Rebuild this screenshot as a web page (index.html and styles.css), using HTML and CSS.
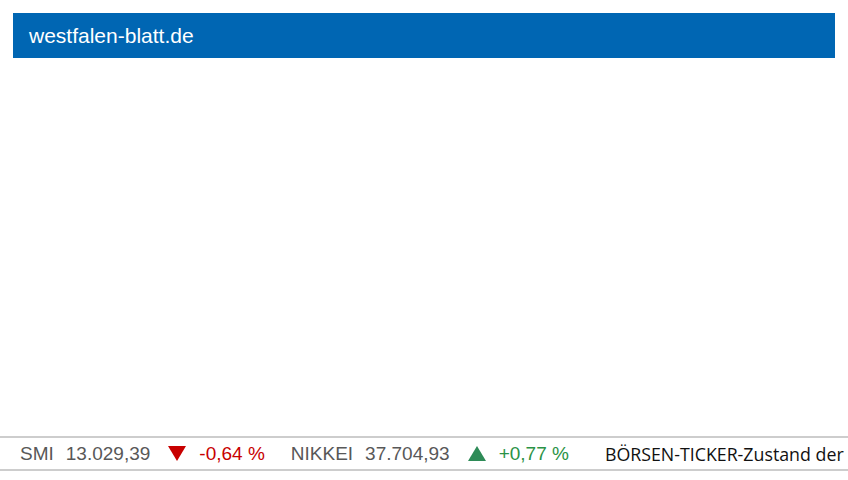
FILE: index.html
```html
<!DOCTYPE html>
<html lang="de">
<head>
  <meta charset="UTF-8">
  <title>westfalen-blatt.de</title>
  <link rel="stylesheet" href="styles.css">
</head>
<body>
  <div class="page">
    <div class="brand-bar">westfalen-blatt.de</div>
    <div class="content"></div>
    <div class="ticker">
      <div class="ticker-track">
        <span class="quote">
          <span class="index-name">SMI</span>
          <span class="index-value">13.029,39</span>
          <svg class="arrow" width="18" height="15" viewBox="0 0 18 15"><polygon points="0,0 18,0 9,15" fill="#c80000"/></svg>
          <span class="change down">-0,64 %</span>
        </span>
        <span class="quote">
          <span class="index-name">NIKKEI</span>
          <span class="index-value">37.704,93</span>
          <svg class="arrow" width="18" height="15" viewBox="0 0 18 15"><polygon points="0,15 18,15 9,0" fill="#2e8b57"/></svg>
          <span class="change up">+0,77 %</span>
        </span>
        <span class="headline">BÖRSEN-TICKER-Zustand der</span>
      </div>
    </div>
  </div>
</body>
</html>
```

FILE: styles.css
```css
:root {
  --blue: #0066b3;
  --line: #cdcdcd;
  --grey: #585858;
  --red: #c80000;
  --green: #2a9245;
}
body {
  margin: 0;
  background: #fff;
  font-family: 'Liberation Sans', Arial, sans-serif;
}
.page {
  height: 480px;
  display: flex;
  flex-direction: column;
  overflow: hidden;
}
.brand-bar {
  margin: 13px 13px 0 13px;
  height: 45px;
  line-height: 45px;
  padding-left: 16px;
  background: var(--blue);
  color: #fff;
  font-size: 21px;
}
.content {
  height: 378px;
}
.ticker {
  border-top: 2px solid var(--line);
  border-bottom: 2px solid var(--line);
  height: 31px;
  overflow: hidden;
  white-space: nowrap;
}
.ticker-track {
  display: flex;
  align-items: center;
  height: 31px;
  padding-left: 20px;
  font-size: 19px;
}
.quote {
  display: flex;
  align-items: center;
  margin-right: 26px;
}
.index-name {
  color: var(--grey);
  margin-right: 12px;
}
.index-value {
  color: var(--grey);
  margin-right: 18px;
}
.arrow {
  margin-right: 13px;
}
.change.down {
  color: var(--red);
}
.change.up {
  color: var(--green);
}
.quote:nth-child(2) {
  margin-right: 36px;
}
.headline {
  font-family: 'Open Sans', 'Noto Sans', sans-serif;
  font-size: 17.8px;
  color: #111;
}
```
